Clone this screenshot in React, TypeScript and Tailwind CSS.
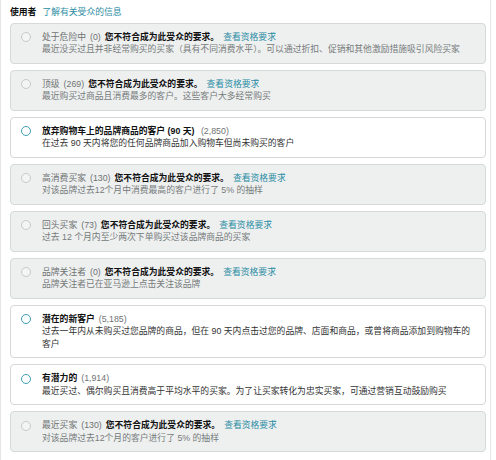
type Item = {
  name: string;
  count: string;
  desc: string;
  enabled: boolean;
};

const items: Item[] = [
  {
    name: "处于危险中",
    count: "(0)",
    desc: "最近没买过且并非经常购买的买家（具有不同消费水平）。可以通过折扣、促销和其他激励措施吸引风险买家",
    enabled: false,
  },
  {
    name: "顶级",
    count: "(269)",
    desc: "最近购买过商品且消费最多的客户。这些客户大多经常购买",
    enabled: false,
  },
  {
    name: "放弃购物车上的品牌商品的客户 (90 天) ",
    count: "(2,850)",
    desc: "在过去 90 天内将您的任何品牌商品加入购物车但尚未购买的客户",
    enabled: true,
  },
  {
    name: "高消费买家",
    count: "(130)",
    desc: "对该品牌过去12个月中消费最高的客户进行了 5% 的抽样",
    enabled: false,
  },
  {
    name: "回头买家",
    count: "(73)",
    desc: "过去 12 个月内至少两次下单购买过该品牌商品的买家",
    enabled: false,
  },
  {
    name: "品牌关注者",
    count: "(0)",
    desc: "品牌关注者已在亚马逊上点击关注该品牌",
    enabled: false,
  },
  {
    name: "潜在的新客户",
    count: "(5,185)",
    desc: "过去一年内从未购买过您品牌的商品，但在 90 天内点击过您的品牌、店面和商品，或曾将商品添加到购物车的客户",
    enabled: true,
  },
  {
    name: "有潜力的",
    count: "(1,914)",
    desc: "最近买过、偶尔购买且消费高于平均水平的买家。为了让买家转化为忠实买家，可通过营销互动鼓励购买",
    enabled: true,
  },
  {
    name: "最近买家",
    count: "(130)",
    desc: "对该品牌过去12个月的客户进行了 5% 的抽样",
    enabled: false,
  },
];

function Radio({ enabled }: { enabled: boolean }) {
  return (
    <span
      className={
        enabled
          ? "mt-[1.5px] block h-[10px] w-[10px] shrink-0 rounded-full border-[1.5px] border-[#3f9fb5] bg-white"
          : "mt-[1.5px] block h-[10px] w-[10px] shrink-0 rounded-full border border-[#c6caca] bg-[#f3f4f4]"
      }
    />
  );
}

function AudienceCard({ item }: { item: Item }) {
  const { enabled } = item;
  return (
    <div
      className={
        enabled
          ? "flex gap-[11px] rounded-[4px] border border-[#d5d9d9] bg-white px-[10px] py-[7px]"
          : "flex gap-[11px] rounded-[4px] border border-[#d5d9d9] bg-[#eef0f0] px-[10px] py-[7px]"
      }
    >
      <Radio enabled={enabled} />
      <div className="min-w-0 flex-1">
        <div className="whitespace-nowrap">
          {enabled ? (
            <>
              <span className="font-bold text-[#0f1111]">{item.name}</span>
              <span className="ml-[4px] text-[#6f7373]">{item.count}</span>
            </>
          ) : (
            <>
              <span className="text-[#6f7373]">{item.name}</span>
              <span className="mx-[4px] text-[#6f7373]">{item.count}</span>
              <span className="font-bold text-[#111]">您不符合成为此受众的要求。</span>
              <span className="ml-[4px] text-[#2a8ca3]">查看资格要求</span>
            </>
          )}
        </div>
        <div className={enabled ? "text-[#333]" : "text-[#767b7b]"}>{item.desc}</div>
      </div>
    </div>
  );
}

export default function App() {
  return (
    <div
      className="h-[460px] w-[491px] overflow-hidden border-x border-[#e3e6e6] bg-white pl-[9px] pr-[4px] pt-[6px] text-[8.8px] leading-[12.5px]"
      style={{ fontFamily: '"Liberation Sans", "Noto Sans CJK SC", sans-serif' }}
    >
      <div className="mb-[4px] flex gap-[6px]">
        <span className="font-bold text-[#0f1111]">使用者</span>
        <span className="text-[#2a8ca3]">了解有关受众的信息</span>
      </div>
      <div className="flex flex-col gap-[6px]">
        {items.map((item) => (
          <AudienceCard key={item.name} item={item} />
        ))}
      </div>
    </div>
  );
}
